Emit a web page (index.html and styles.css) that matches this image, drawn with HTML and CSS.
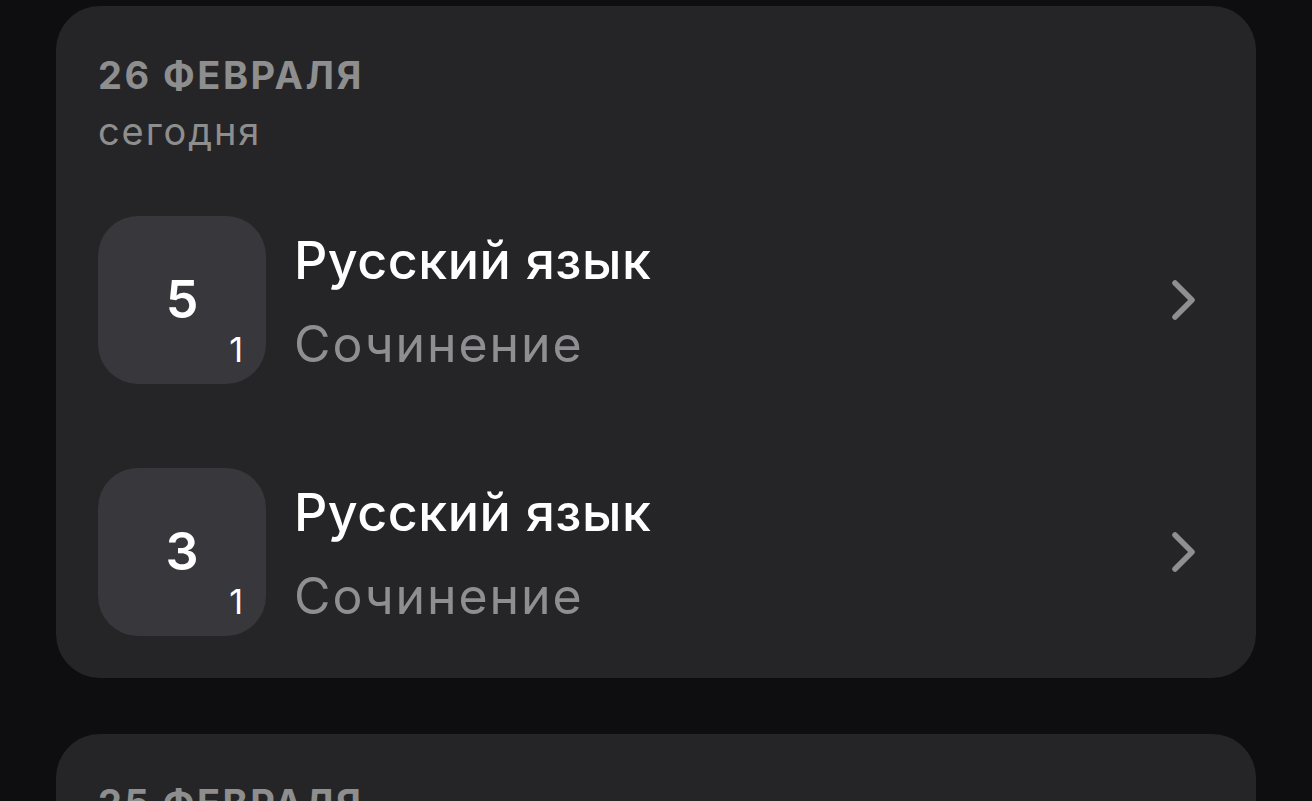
FILE: index.html
```html
<!DOCTYPE html>
<html lang="ru">
<head>
    <meta charset="UTF-8">
    <title>Оценки</title>
    <meta name="viewport" content="width=device-width, initial-scale=1">
    <link rel="stylesheet" href="styles.css">
</head>
<body>
    <div class="feed">
        <!-- 26 февраля -->
        <section class="day-card">
            <div class="day-head">
                <div class="day-date">26 февраля</div>
                <div class="day-note">сегодня</div>
            </div>
            <div class="marks">
                <a class="mark-row" href="#">
                    <div class="mark-tile">
                        <span class="mark-value">5</span>
                        <span class="mark-weight">1</span>
                    </div>
                    <div class="mark-info">
                        <div class="mark-subject">Русский язык</div>
                        <div class="mark-work">Сочинение</div>
                    </div>
                    <svg class="chevron" width="40" height="48" viewBox="0 0 40 48">
                        <path d="M11 7 L28 24 L11 41" />
                    </svg>
                </a>
                <a class="mark-row" href="#">
                    <div class="mark-tile">
                        <span class="mark-value">3</span>
                        <span class="mark-weight">1</span>
                    </div>
                    <div class="mark-info">
                        <div class="mark-subject">Русский язык</div>
                        <div class="mark-work">Сочинение</div>
                    </div>
                    <svg class="chevron" width="40" height="48" viewBox="0 0 40 48">
                        <path d="M11 7 L28 24 L11 41" />
                    </svg>
                </a>
            </div>
        </section>

        <!-- 25 февраля -->
        <section class="day-card">
            <div class="day-head">
                <div class="day-date">25 февраля</div>
                <div class="day-note">вчера</div>
            </div>
        </section>
    </div>
</body>
</html>
```

FILE: styles.css
```css
body {
    margin: 0;
    background: #0e0e10;
    font-family: Inter, "Noto Sans", Roboto, sans-serif;
    color: #fff;
}

.feed {
    display: flex;
    flex-direction: column;
    gap: 56px;
    padding: 6px 56px 40px 56px;
}

.day-card {
    background: #252527;
    border-radius: 44px;
    padding: 46px 42px 42px 42px;
}

.day-date {
    font-size: 38px;
    line-height: 46px;
    font-weight: 700;
    letter-spacing: 2.5px;
    text-transform: uppercase;
    color: #8e8e8f;
}
.day-note {
    margin-top: 10px;
    font-size: 38px;
    line-height: 46px;
    letter-spacing: 1.9px;
    color: #8e8e8f;
}

.marks {
    margin-top: 62px;
    display: flex;
    flex-direction: column;
    gap: 84px;
}

.mark-row {
    display: flex;
    align-items: center;
    text-decoration: none;
    color: inherit;
}

.mark-tile {
    position: relative;
    flex: 0 0 168px;
    height: 168px;
    border-radius: 40px;
    background: #38383c;
    display: flex;
    align-items: center;
    justify-content: center;
}
.mark-value {
    font-size: 52px;
    font-weight: 600;
    line-height: 1;
}
.mark-weight {
    position: absolute;
    right: 23px;
    bottom: 17px;
    font-size: 34px;
    line-height: 1;
}

.mark-info {
    flex: 1;
    margin-left: 28px;
    padding-top: 4px;
    display: flex;
    flex-direction: column;
    gap: 22px;
}
.mark-subject {
    font-size: 52px;
    line-height: 62px;
    font-weight: 500;
    letter-spacing: 0.5px;
}
.mark-work {
    font-size: 50px;
    line-height: 60px;
    letter-spacing: 1.9px;
    color: #8e8e93;
}

.chevron {
    flex: none;
    margin-right: 10px;
}
.chevron path {
    fill: none;
    stroke: #8e8e93;
    stroke-width: 5.5;
    stroke-linecap: round;
    stroke-linejoin: round;
}
```
